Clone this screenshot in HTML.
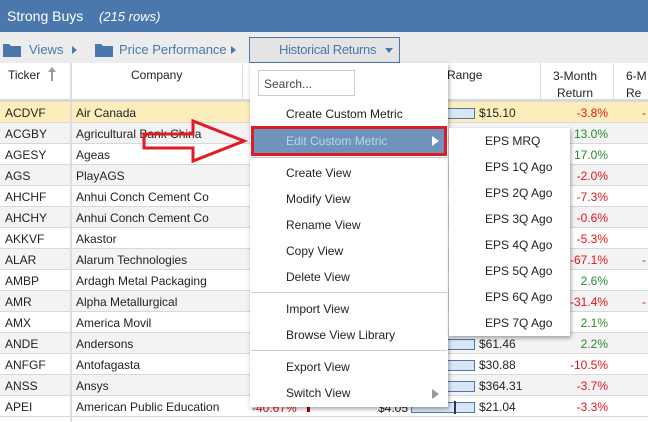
<!DOCTYPE html>
<html><head><style>
*{margin:0;padding:0;box-sizing:border-box}
body{width:648px;height:422px;overflow:hidden;background:#fff;font-family:"Liberation Sans",Arial,sans-serif;font-size:12px;color:#222;position:relative}
.a{position:absolute;white-space:nowrap}
.row{position:absolute;left:0;width:648px;height:21px;border-bottom:1px solid #d8d8d8}
.g{background:#f3f3f3}
.hl{background:#fbeebb}
.t{position:absolute;left:5px;top:4px}
.c{position:absolute;left:76px;top:4px}
.p{position:absolute;right:40px;top:4px;text-align:right}
.r{color:#e0141e}.gr{color:#2a8a2a}
.bar{position:absolute;left:411px;top:6px;width:64px;height:11px;border:1px solid #4a78ad;background:#d8e6f6}
.pr{position:absolute;left:479px;top:4px}
.mi{position:absolute;left:286px;font-size:12px;color:#222}
.si{position:absolute;left:485px;font-size:12px;color:#222}
.sep{position:absolute;left:251px;width:196px;height:1px;background:#ccc}
</style></head><body>
<div class="a" style="left:0;top:0;width:648px;height:32px;background:#4a78ad"></div>
<div class="a" style="left:7px;top:8px;color:#fff;font-size:14px">Strong Buys</div>
<div class="a" style="left:99px;top:9px;color:#fff;font-size:13px;font-style:italic">(215 rows)</div>
<div class="a" style="left:0;top:32px;width:648px;height:31px;background:#ececec"></div>
<svg class="a" style="left:3px;top:43px" width="18" height="14"><path d="M0 1h6l2 2h10v11H0z" fill="#4a78ad"/></svg>
<div class="a" style="left:29px;top:42px;color:#4a78ad;font-size:13px">Views</div>
<svg class="a" style="left:72px;top:46px" width="6" height="8"><path d="M0 0l5 4-5 4z" fill="#4a78ad"/></svg>
<svg class="a" style="left:95px;top:43px" width="18" height="14"><path d="M0 1h6l2 2h10v11H0z" fill="#4a78ad"/></svg>
<div class="a" style="left:119px;top:42px;color:#4a78ad;font-size:13px">Price Performance</div>
<svg class="a" style="left:231px;top:46px" width="6" height="8"><path d="M0 0l5 4-5 4z" fill="#4a78ad"/></svg>
<div class="a" style="left:249px;top:37px;width:151px;height:26px;border:1px solid #4a78ad;background:#e4e4e4"></div>
<div class="a" style="left:279px;top:42px;color:#4a78ad;font-size:13px;letter-spacing:-0.3px">Historical Returns</div>
<svg class="a" style="left:385px;top:48px" width="8" height="5"><path d="M0 0h8l-4 5z" fill="#4a78ad"/></svg>
<!-- header -->
<div class="a" style="left:0;top:63px;width:648px;height:39px;border-bottom:3px solid #d8d8d8"></div>
<div class="a" style="left:70px;top:63px;width:2px;height:37px;background:#ddd"></div>
<div class="a" style="left:242px;top:63px;width:1px;height:37px;background:#ddd"></div>
<div class="a" style="left:540px;top:63px;width:1px;height:37px;background:#ddd"></div>
<div class="a" style="left:613px;top:63px;width:1px;height:37px;background:#ddd"></div>
<div class="a" style="left:8px;top:68px">Ticker</div>
<svg class="a" style="left:48px;top:67px" width="8" height="14"><path d="M4 0L0 5h3v9h2V5h3z" fill="#999"/></svg>
<div class="a" style="left:131px;top:68px">Company</div>
<div class="a" style="left:447px;top:68px">Range</div>
<div class="a" style="left:553px;top:68px;text-align:center;line-height:17px">3-Month<br>Return</div>
<div class="a" style="left:626px;top:68px;line-height:17px">6-M<br>Re</div>
<!-- rows -->
<div class="row hl" style="top:102px"><span class="t">ACDVF</span><span class="c">Air Canada</span><div class="bar"></div><span class="pr">$15.10</span><span class="p r">-3.8%</span><span class="a r" style="left:642px;top:4px">-</span></div>
<div class="row g" style="top:123px"><span class="t">ACGBY</span><span class="c">Agricultural Bank China</span><span class="p gr">13.0%</span></div>
<div class="row" style="top:144px"><span class="t">AGESY</span><span class="c">Ageas</span><span class="p gr">17.0%</span></div>
<div class="row g" style="top:165px"><span class="t">AGS</span><span class="c">PlayAGS</span><span class="p r">-2.0%</span></div>
<div class="row" style="top:186px"><span class="t">AHCHF</span><span class="c">Anhui Conch Cement Co</span><span class="p r">-7.3%</span></div>
<div class="row g" style="top:207px"><span class="t">AHCHY</span><span class="c">Anhui Conch Cement Co</span><span class="p r">-0.6%</span></div>
<div class="row" style="top:228px"><span class="t">AKKVF</span><span class="c">Akastor</span><span class="p r">-5.3%</span></div>
<div class="row g" style="top:249px"><span class="t">ALAR</span><span class="c">Alarum Technologies</span><span class="p r">-67.1%</span><span class="a r" style="left:642px;top:4px">-</span></div>
<div class="row" style="top:270px"><span class="t">AMBP</span><span class="c">Ardagh Metal Packaging</span><span class="p gr">2.6%</span></div>
<div class="row g" style="top:291px"><span class="t">AMR</span><span class="c">Alpha Metallurgical</span><span class="p r">-31.4%</span><span class="a r" style="left:642px;top:4px">-</span></div>
<div class="row" style="top:312px"><span class="t">AMX</span><span class="c">America Movil</span><span class="p gr">2.1%</span></div>
<div class="row g" style="top:333px"><span class="t">ANDE</span><span class="c">Andersons</span><div class="bar"></div><span class="pr">$61.46</span><span class="p gr">2.2%</span></div>
<div class="row" style="top:354px"><span class="t">ANFGF</span><span class="c">Antofagasta</span><div class="bar"></div><span class="pr">$30.88</span><span class="p r">-10.5%</span></div>
<div class="row g" style="top:375px"><span class="t">ANSS</span><span class="c">Ansys</span><div class="bar"></div><span class="pr">$364.31</span><span class="p r">-3.7%</span></div>
<div class="row" style="top:396px"><span class="t">APEI</span><span class="c">American Public Education</span><span class="a r" style="left:252px;top:5px">-40.67%</span><span class="a" style="left:307px;top:6px;width:3px;height:10px;background:#a00"></span><span class="a" style="left:378px;top:5px">$4.05</span><div class="bar"><span class="a" style="left:42px;top:-2px;width:2px;height:13px;background:#335"></span></div><span class="pr">$21.04</span><span class="p r">-3.3%</span></div>
<div class="a" style="left:0;top:418px;width:648px;height:4px;background:#fff"></div>
<div class="a" style="left:70px;top:102px;width:2px;height:320px;background:#ddd"></div>
<!-- menu -->
<div class="a" style="left:250px;top:63px;width:198px;height:344px;background:#fff;box-shadow:1px 2px 4px rgba(0,0,0,.35)"></div>
<div class="a" style="left:258px;top:70px;width:97px;height:26px;border:1px solid #ccc;background:#fff"></div>
<div class="a" style="left:264px;top:77px;color:#444">Search...</div>
<div class="mi" style="top:107px">Create Custom Metric</div>
<div class="a" style="left:251px;top:126px;width:196px;height:30px;background:#6e93bd;border:3px solid #e01b24"></div>
<div class="mi" style="top:134px;color:#c5d3e3">Edit Custom Metric</div>
<svg class="a" style="left:432px;top:136px" width="7" height="10"><path d="M0 0l7 5-7 5z" fill="#fff"/></svg>
<div class="sep" style="top:157px"></div>
<div class="mi" style="top:166px">Create View</div>
<div class="mi" style="top:192px">Modify View</div>
<div class="mi" style="top:218px">Rename View</div>
<div class="mi" style="top:244px">Copy View</div>
<div class="mi" style="top:270px">Delete View</div>
<div class="sep" style="top:292px"></div>
<div class="mi" style="top:302px">Import View</div>
<div class="mi" style="top:328px">Browse View Library</div>
<div class="sep" style="top:350px"></div>
<div class="mi" style="top:360px">Export View</div>
<div class="mi" style="top:386px">Switch View</div>
<svg class="a" style="left:432px;top:389px" width="7" height="10"><path d="M0 0l7 5-7 5z" fill="#999"/></svg>
<!-- submenu -->
<div class="a" style="left:449px;top:128px;width:121px;height:208px;background:#fff;box-shadow:1px 2px 4px rgba(0,0,0,.35)"></div>
<div class="si" style="top:134px">EPS MRQ</div>
<div class="si" style="top:160px">EPS 1Q Ago</div>
<div class="si" style="top:186px">EPS 2Q Ago</div>
<div class="si" style="top:212px">EPS 3Q Ago</div>
<div class="si" style="top:238px">EPS 4Q Ago</div>
<div class="si" style="top:264px">EPS 5Q Ago</div>
<div class="si" style="top:290px">EPS 6Q Ago</div>
<div class="si" style="top:316px">EPS 7Q Ago</div>
<!-- red arrow -->
<svg class="a" style="left:140px;top:118px" width="110" height="48"><path d="M4 16H53V3L104 23 53 43V30H4Z" fill="none" stroke="#e01b24" stroke-width="3"/></svg>
</body></html>
